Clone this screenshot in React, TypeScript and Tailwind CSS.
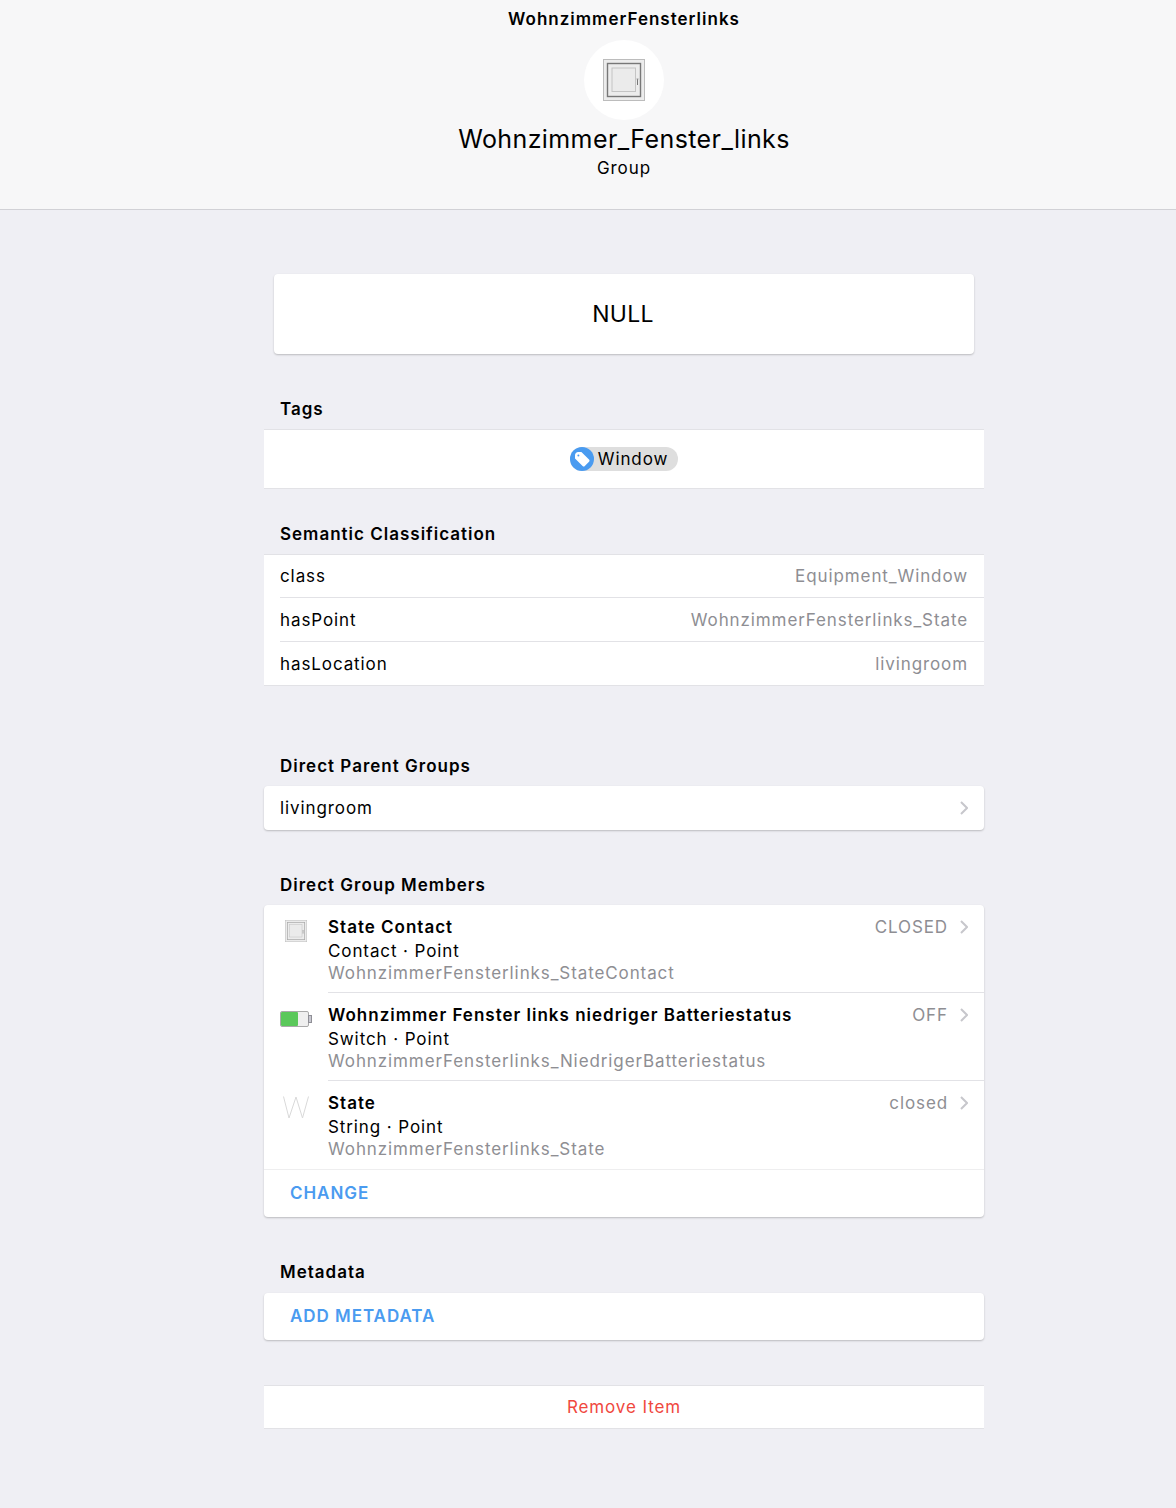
const font = { fontFamily: 'Inter, "Noto Sans", sans-serif' };

/** window icon used for the group and the contact item */
function WindowIcon({ size, frame = '#777' }: { size: number; frame?: string }) {
  return (
    <svg width={size} height={size} viewBox="0 0 42 42" className="block">
      <rect x="0.5" y="0.5" width="41" height="41" fill="#ececec" stroke="#bcbcbc" />
      <rect x="4.5" y="4.5" width="33" height="33" fill="#ececec" stroke={frame} strokeWidth="1.4" />
      <rect x="9" y="9" width="23.5" height="23.5" fill="#ebebeb" stroke="#c4c4c4" strokeWidth="1" />
      <path d="M34.5 20v6" stroke="#777" strokeWidth="1" />
      <path d="M33.5 20h2" stroke="#999" strokeWidth="1" />
    </svg>
  );
}

function BatteryIcon() {
  return (
    <svg width="32" height="16" viewBox="0 0 32 16" className="block">
      <rect x="0.5" y="0.5" width="28" height="15" rx="1.5" fill="#efefef" stroke="#a9a9a9" />
      <rect x="1" y="1" width="17" height="14" rx="1" fill="#5ac85a" />
      <rect x="28.5" y="4.5" width="3" height="7" fill="#c8c8d0" stroke="#8f8f96" />
    </svg>
  );
}

function StringIcon() {
  return (
    <svg width="26" height="23" viewBox="0 0 26 23" className="block">
      <path d="M.5.5 6 22 13 1l6.5 21L25.5.5" fill="none" stroke="#d9d9d9" strokeWidth="1" />
    </svg>
  );
}

function TagIcon() {
  return (
    <svg width="24" height="24" viewBox="0 0 24 24" className="block">
      <circle cx="12" cy="12" r="12" fill="#4a9bf0" />
      <path d="M5 8.2c0-1.8 1.4-3.2 3.2-3.2h3.2l7.6 7.6c.7.7.7 1.5 0 2.2l-4.2 4.2c-.7.7-1.5.7-2.2 0L5 11.4z" fill="#fff" />
      <circle cx="8.4" cy="8.4" r="1" fill="#4a9bf0" />
    </svg>
  );
}

function Chevron() {
  return (
    <svg width="8" height="14" viewBox="0 0 8 14" className="block shrink-0">
      <path d="M1 1l6 6-6 6" fill="none" stroke="#c7c7cc" strokeWidth="2" />
    </svg>
  );
}

function SectionTitle({ children, className }: { children: string; className: string }) {
  return <div className={`px-4 text-[17px] leading-[22px] font-semibold tracking-[1px] text-black ${className}`}>{children}</div>;
}

function SemanticRow({ label, value, last, first }: { label: string; value: string; last?: boolean; first?: boolean }) {
  return (
    <div className={`flex pl-4 ${first || last ? 'h-[43px]' : 'h-11'}`}>
      <div className={`flex flex-1 items-center justify-between pt-[2px] pr-4 ${last ? '' : 'border-b border-[#e2e2e6]'}`}>
        <span className="text-black">{label}</span>
        <span className="text-[#8e8e93]">{value}</span>
      </div>
    </div>
  );
}

function MemberRow({
  icon,
  title,
  subtitle,
  name,
  state,
  last,
}: {
  icon: React.ReactNode;
  title: string;
  subtitle: string;
  name: string;
  state: string;
  last?: boolean;
}) {
  return (
    <div className="flex h-[88px] pl-4">
      <div className="flex w-12 shrink-0">{icon}</div>
      <div className={`flex-1 pt-[10px] pr-4 ${last ? '' : 'border-b border-[#e2e2e6]'}`}>
        <div className="flex items-center justify-between leading-[24px]">
          <span className="font-semibold tracking-[1px] text-black">{title}</span>
          <span className="flex items-center gap-3 text-[#8e8e93]">
            {state}
            <Chevron />
          </span>
        </div>
        <div className="leading-[24px] text-black">{subtitle}</div>
        <div className="leading-[20px] text-[#8e8e93]">{name}</div>
      </div>
    </div>
  );
}

export default function App() {
  return (
    <div className="min-h-[1508px] bg-[#efeff4] text-[17px] tracking-[0.9px] text-black" style={font}>
      <header className="flex h-[210px] flex-col items-center border-b border-[#d1d1d6] bg-[#f7f7f8] pl-[72px]">
        <div className="mt-[8px] text-[17px] leading-[22px] font-semibold tracking-[1px]">WohnzimmerFensterlinks</div>
        <div className="mt-[10px] flex h-20 w-20 items-center justify-center rounded-full bg-white">
          <WindowIcon size={42} />
        </div>
        <div className="mt-[3px] text-[25px] leading-[32px] font-normal tracking-[0.4px]">Wohnzimmer_Fenster_links</div>
        <div className="mt-[1px] text-[17px] leading-[24px]">Group</div>
      </header>

      <main className="pl-[72px]">
        <div className="mx-auto w-[720px]">
          <div className="mx-[10px] mt-[64px] flex h-20 items-center justify-center rounded bg-white pr-[2px] text-[23px] tracking-[0.3px] shadow-[0_1px_2px_rgba(0,0,0,0.22)]">
            NULL
          </div>

          <SectionTitle className="mt-[44px]">Tags</SectionTitle>
          <div className="mt-[9px] flex h-[60px] items-center justify-center border-y border-[#e2e2e6] bg-white">
            <div className="flex h-6 items-center rounded-full bg-[#dedede] pr-[10px]">
              <TagIcon />
              <span className="ml-[4px] pt-[2px]">Window</span>
            </div>
          </div>

          <SectionTitle className="mt-[34px]">Semantic Classification</SectionTitle>
          <div className="mt-[9px] border-y border-[#e2e2e6] bg-white">
            <SemanticRow label="class" value="Equipment_Window" first />
            <SemanticRow label="hasPoint" value="WohnzimmerFensterlinks_State" />
            <SemanticRow label="hasLocation" value="livingroom" last />
          </div>

          <SectionTitle className="mt-[69px]">Direct Parent Groups</SectionTitle>
          <div className="mt-[9px] flex h-11 items-center justify-between rounded bg-white px-4 shadow-[0_1px_2px_rgba(0,0,0,0.22)]">
            <span className="pt-[2px]">livingroom</span>
            <Chevron />
          </div>

          <SectionTitle className="mt-[44px]">Direct Group Members</SectionTitle>
          <div className="mt-[9px] rounded bg-white shadow-[0_1px_2px_rgba(0,0,0,0.22)]">
            <MemberRow
              icon={<div className="pt-[15px] pl-[5px]"><WindowIcon size={22} frame="#aaa" /></div>}
              title="State Contact"
              subtitle="Contact · Point"
              name="WohnzimmerFensterlinks_StateContact"
              state="CLOSED"
            />
            <MemberRow
              icon={<div className="pt-[18px]"><BatteryIcon /></div>}
              title="Wohnzimmer Fenster links niedriger Batteriestatus"
              subtitle="Switch · Point"
              name="WohnzimmerFensterlinks_NiedrigerBatteriestatus"
              state="OFF"
            />
            <MemberRow
              icon={<div className="pt-[15px] pl-[3px]"><StringIcon /></div>}
              title="State"
              subtitle="String · Point"
              name="WohnzimmerFensterlinks_State"
              state="closed"
              last
            />
            <div className="flex h-12 items-center border-t border-[#eeeeef] px-[26px] font-semibold tracking-[0.95px] text-[#4a9bf0]">
              CHANGE
            </div>
          </div>

          <SectionTitle className="mt-[44px]">Metadata</SectionTitle>
          <div className="mt-[10px] flex h-[47px] items-center rounded bg-white px-[26px] font-semibold tracking-[0.95px] text-[#4a9bf0] shadow-[0_1px_2px_rgba(0,0,0,0.22)]">
            ADD METADATA
          </div>

          <div className="mt-[45px] flex h-11 items-center justify-center border-y border-[#e2e2e6] bg-white pt-[1px] text-[#f0483e]">
            Remove Item
          </div>
        </div>
      </main>
    </div>
  );
}
